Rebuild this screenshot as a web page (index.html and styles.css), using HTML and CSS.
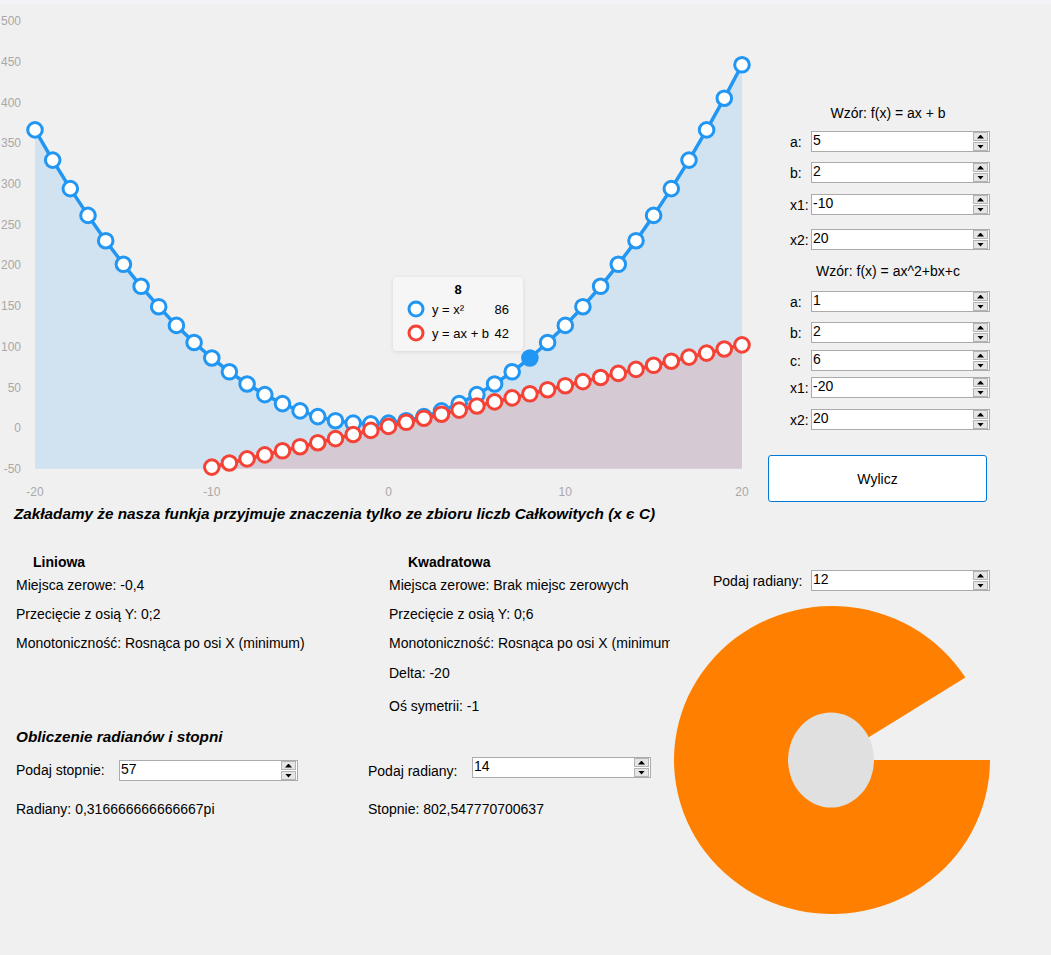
FILE: index.html
```html
<!DOCTYPE html>
<html lang="pl">
<head>
<meta charset="utf-8">
<title>Funkcje</title>
<link rel="stylesheet" href="styles.css">
</head>
<body>
<div class="app">
  <div class="top">
    <div class="chart">
      <svg id="plot" class="chart-svg" width="768" height="498" viewBox="0 4 768 498">
        <g class="ax ax-y">
          <text x="21" y="25.1">500</text>
          <text x="21" y="65.8">450</text>
          <text x="21" y="106.5">400</text>
          <text x="21" y="147.3">350</text>
          <text x="21" y="188">300</text>
          <text x="21" y="228.7">250</text>
          <text x="21" y="269.4">200</text>
          <text x="21" y="310.1">150</text>
          <text x="21" y="350.9">100</text>
          <text x="21" y="391.6">50</text>
          <text x="21" y="432.3">0</text>
          <text x="21" y="473">-50</text>
        </g>
        <g class="ax ax-x">
          <text x="35" y="496.3">-20</text>
          <text x="211.8" y="496.3">-10</text>
          <text x="388.5" y="496.3">0</text>
          <text x="565.3" y="496.3">10</text>
          <text x="742" y="496.3">20</text>
        </g>
      </svg>
      <div class="tooltip">
        <div class="tt-title">8</div>
        <div class="tt-row">
          <svg class="tt-mark" width="18" height="18" viewBox="0 0 18 18"><circle class="mk mk-blue" cx="9" cy="9" r="7"/></svg>
          <span class="tt-name">y = x²</span>
          <span class="tt-val">86</span>
        </div>
        <div class="tt-row">
          <svg class="tt-mark" width="18" height="18" viewBox="0 0 18 18"><circle class="mk mk-red" cx="9" cy="9" r="7"/></svg>
          <span class="tt-name">y = ax + b</span>
          <span class="tt-val">42</span>
        </div>
      </div>
    </div>

    <div class="panel">
      <div class="ptitle t1">Wzór: f(x) = ax + b</div>
      <div class="prow m10"><span class="plbl">a:</span><div class="spin"><span class="val">5</span><span class="btns"><span class="sb up"></span><span class="sb down"></span></span></div></div>
      <div class="prow m10"><span class="plbl">b:</span><div class="spin"><span class="val">2</span><span class="btns"><span class="sb up"></span><span class="sb down"></span></span></div></div>
      <div class="prow m11"><span class="plbl">x1:</span><div class="spin"><span class="val">-10</span><span class="btns"><span class="sb up"></span><span class="sb down"></span></span></div></div>
      <div class="prow m14"><span class="plbl">x2:</span><div class="spin"><span class="val">20</span><span class="btns"><span class="sb up"></span><span class="sb down"></span></span></div></div>
      <div class="ptitle t2">Wzór: f(x) = ax^2+bx+c</div>
      <div class="prow m12"><span class="plbl">a:</span><div class="spin"><span class="val">1</span><span class="btns"><span class="sb up"></span><span class="sb down"></span></span></div></div>
      <div class="prow m10"><span class="plbl">b:</span><div class="spin"><span class="val">2</span><span class="btns"><span class="sb up"></span><span class="sb down"></span></span></div></div>
      <div class="prow m7"><span class="plbl">c:</span><div class="spin"><span class="val">6</span><span class="btns"><span class="sb up"></span><span class="sb down"></span></span></div></div>
      <div class="prow m6"><span class="plbl">x1:</span><div class="spin"><span class="val">-20</span><span class="btns"><span class="sb up"></span><span class="sb down"></span></span></div></div>
      <div class="prow m11"><span class="plbl">x2:</span><div class="spin"><span class="val">20</span><span class="btns"><span class="sb up"></span><span class="sb down"></span></span></div></div>
      <button class="btn" type="button">Wylicz</button>
    </div>
  </div>

  <p class="assume">Zakładamy że nasza funkja przyjmuje znaczenia tylko ze zbioru liczb Całkowitych (x є C)</p>

  <div class="bottom">
    <div class="left">
      <div class="props">
        <div class="col col1">
          <h3>Liniowa</h3>
          <p>Miejsca zerowe: -0,4</p>
          <p>Przecięcie z osią Y: 0;2</p>
          <p>Monotoniczność: Rosnąca po osi X (minimum)</p>
        </div>
        <div class="col col2">
          <h3>Kwadratowa</h3>
          <p>Miejsca zerowe: Brak miejsc zerowych</p>
          <p>Przecięcie z osią Y: 0;6</p>
          <p>Monotoniczność: Rosnąca po osi X (minimum)</p>
          <p class="g14">Delta: -20</p>
          <p class="g17">Oś symetrii: -1</p>
        </div>
      </div>

      <h4 class="conv-title">Obliczenie radianów i stopni</h4>
      <div class="conv">
        <div class="conv-col c1">
          <div class="conv-row"><span class="clbl">Podaj stopnie:</span><div class="spin"><span class="val">57</span><span class="btns"><span class="sb up"></span><span class="sb down"></span></span></div></div>
          <p class="result">Radiany: 0,316666666666667pi</p>
        </div>
        <div class="conv-col c2">
          <div class="conv-row"><span class="clbl">Podaj radiany:</span><div class="spin"><span class="val">14</span><span class="btns"><span class="sb up"></span><span class="sb down"></span></span></div></div>
          <p class="result">Stopnie: 802,547770700637</p>
        </div>
      </div>
    </div>

    <div class="right">
      <div class="rad-row"><span class="rlbl">Podaj radiany:</span><div class="spin"><span class="val">12</span><span class="btns"><span class="sb up"></span><span class="sb down"></span></span></div></div>
      <svg class="pie" width="378" height="364" viewBox="673 591 378 364">
        <path class="pie-slice" d="M832 760 L990 760 A158 154 0 1 1 965.4 677.5 Z"/>
        <ellipse class="pie-hole" cx="831" cy="760" rx="43" ry="47.5"/>
      </svg>
    </div>
  </div>
</div>
<script src="script.js"></script>
</body>
</html>
```

FILE: styles.css
```css
* { box-sizing: border-box; margin: 0; padding: 0; }

html, body { background: #f0f0f0; }

body {
  width: 1051px;
  height: 955px;
  overflow: hidden;
  font-family: "Liberation Sans", Arial, sans-serif;
  font-size: 14px;
  color: #000;
}

.app {
  border-top: 4px solid #f3f3f7;
  height: 955px;
}

/* ---------- top: chart + parameter panel ---------- */
.top { display: flex; height: 498px; }

.chart { position: relative; width: 768px; height: 498px; flex: none; }
.chart-svg { display: block; }

.ax text { font-family: "Liberation Sans", Arial, sans-serif; font-size: 12px; fill: #a8a8a8; }
.ax-y text { text-anchor: end; }
.ax-x text { text-anchor: middle; }

.area-blue { fill: rgba(33, 150, 243, 0.15); }
.area-red { fill: rgba(244, 67, 54, 0.15); }
.line { fill: none; stroke-width: 3.5; stroke-linejoin: round; }
.line.blue { stroke: #2196f3; }
.line.red { stroke: #f44336; }
.dot { fill: #fff; stroke-width: 3; }
.dot.blue { stroke: #2196f3; }
.dot.red { stroke: #f44336; }
.dot.hl { fill: #2196f3; }

.tooltip {
  position: absolute;
  left: 393px;
  top: 273px;
  width: 130px;
  height: 74px;
  padding: 5px 14px 0 14px;
  background: #f6f6f6;
  border-radius: 4px;
  box-shadow: 0 1px 4px rgba(0, 0, 0, 0.10);
  font-size: 13px;
}
.tt-title { text-align: center; font-weight: bold; line-height: 16px; margin-bottom: -1px; }
.tt-row {
  display: grid;
  grid-template-columns: 18px 56px 1fr;
  column-gap: 6px;
  align-items: center;
  height: 24px;
}
.tt-mark { display: block; }
.tt-name { padding-left: 1px; white-space: nowrap; }
.tt-val { text-align: right; }
.mk { fill: #fff; stroke-width: 3; }
.mk-blue { stroke: #2196f3; }
.mk-red { stroke: #f44336; }

.panel { flex: none; width: 283px; display: flex; flex-direction: column; }
.ptitle { width: 240px; text-align: center; line-height: 16px; }
.t1 { margin-top: 101px; }
.t2 { margin-top: 13px; }

.prow { display: flex; align-items: center; padding-left: 22px; }
.plbl { width: 21px; flex: none; }
.m6 { margin-top: 6px; }
.m7 { margin-top: 7px; }
.m10 { margin-top: 10px; }
.m11 { margin-top: 11px; }
.m12 { margin-top: 12px; }
.m14 { margin-top: 14px; }

/* numeric up-down control */
.spin {
  flex: none;
  width: 179px;
  height: 21px;
  background: #fff;
  border: 1px solid #ababab;
  display: flex;
  align-items: flex-start;
}
.val { flex: 1; padding-left: 1px; line-height: 17px; }
.btns {
  flex: none;
  width: 15px;
  margin-right: 1px;
  display: flex;
  flex-direction: column;
  gap: 1px;
}
.sb {
  height: 9px;
  background: #e5e5e5;
  border: 1px solid #b4b4b4;
  display: flex;
  align-items: center;
  justify-content: center;
}
.sb::before {
  content: "";
  width: 7px;
  height: 4px;
  background: #000;
}
.up::before { clip-path: polygon(50% 0, 100% 100%, 0 100%); }
.down::before { clip-path: polygon(0 0, 100% 0, 50% 100%); }

.btn {
  margin-top: 25px;
  width: 219px;
  height: 47px;
  background: #fff;
  border: 1px solid #0078d7;
  border-radius: 3px;
  font-family: "Liberation Sans", Arial, sans-serif;
  font-size: 14px;
  color: #000;
}

/* ---------- bottom ---------- */
.assume {
  margin: 3px 0 0 14px;
  line-height: 18px;
  font-size: 15.3px;
  font-weight: bold;
  font-style: italic;
  white-space: nowrap;
}

.bottom { display: flex; }

.left { flex: none; width: 673px; padding-left: 16px; }

.props { display: flex; margin-top: 31px; }
.col1 { width: 373px; flex: none; }
.col2 { width: 281px; flex: none; overflow: hidden; white-space: nowrap; }
.props h3 { font-size: 14px; font-weight: bold; line-height: 16px; }
.col1 h3 { padding-left: 17px; }
.col2 h3 { padding-left: 19px; }
.props p { line-height: 16px; margin-top: 13px; }
.props h3 + p { margin-top: 7px; }
.props p.g14 { margin-top: 14px; }
.props p.g17 { margin-top: 17px; }

.conv-title {
  margin-top: 15px;
  line-height: 16px;
  font-size: 15.3px;
  font-weight: bold;
  font-style: italic;
}

.conv { display: flex; }
.conv-col { display: flex; flex-direction: column; }
.c1 { width: 352px; flex: none; }
.conv-row { display: flex; align-items: flex-start; }
.clbl { flex: none; line-height: 16px; }
.c1 .conv-row { margin-top: 15px; }
.c1 .clbl { width: 103px; margin-top: 2px; }
.c2 .conv-row { margin-top: 12px; }
.c2 .clbl { width: 104px; margin-top: 6px; }
.result { line-height: 16px; }
.c1 .result { margin-top: 20px; }
.c2 .result { margin-top: 22px; }

.right { flex: none; width: 378px; }
.rad-row { display: flex; align-items: center; margin-top: 47px; padding-left: 40px; }
.rlbl { width: 98px; flex: none; }

.pie { display: block; }
.pie-slice { fill: #ff8000; }
.pie-hole { fill: #e0e0e0; }
```

FILE: script.js
```js
(function () {
  var NS = 'http://www.w3.org/2000/svg';
  var svg = document.getElementById('plot');

  function X(t) { return 35 + (t + 20) * 17.675; }
  function Y(v) { return 428 - v * 0.8144; }
  var base = Y(-50).toFixed(1);

  function el(name, attrs) {
    var e = document.createElementNS(NS, name);
    for (var k in attrs) e.setAttribute(k, attrs[k]);
    svg.appendChild(e);
    return e;
  }

  function series(from, to, f, color, areaClass, highlight) {
    var pts = [];
    for (var t = from; t <= to; t++) pts.push({ x: X(t), y: Y(f(t)), t: t });
    var s = pts.map(function (p) { return p.x.toFixed(1) + ',' + p.y.toFixed(1); }).join(' ');
    var last = pts[pts.length - 1], first = pts[0];
    el('polygon', { points: s + ' ' + last.x.toFixed(1) + ',' + base + ' ' + first.x.toFixed(1) + ',' + base, 'class': areaClass });
    el('polyline', { points: s, 'class': 'line ' + color });
    pts.forEach(function (p) {
      el('circle', {
        cx: p.x.toFixed(1), cy: p.y.toFixed(1), r: 7.3,
        'class': 'dot ' + color + (p.t === highlight ? ' hl' : '')
      });
    });
  }

  series(-20, 20, function (x) { return x * x + 2 * x + 6; }, 'blue', 'area-blue', 8);
  series(-10, 20, function (x) { return 5 * x + 2; }, 'red', 'area-red', null);
})();
```
